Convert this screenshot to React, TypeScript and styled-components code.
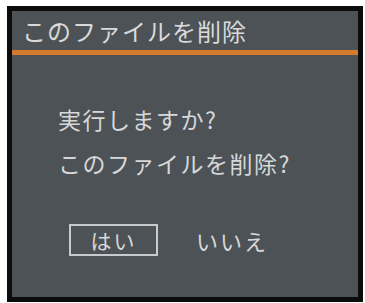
import React from 'react';
import styled, { createGlobalStyle } from 'styled-components';

const Global = createGlobalStyle`
    html, body {
        margin: 0;
        padding: 0;
        background: #ffffff;
    }
    body {
        font-family: "Noto Sans CJK JP", "Noto Sans", sans-serif;
    }
`;

const Frame = styled.div`
    box-sizing: border-box;
    width: 356px;
    height: 296px;
    margin: 6px 0 0 7px;
    border: 5px solid #0c0c0c;
    background: #4d5256;
    display: flex;
    flex-direction: column;
`;

const Header = styled.div`
    height: 39px;
    display: flex;
    align-items: center;
    padding: 0 0 0 10px;
    color: #d9dadb;
    font-size: 24px;
    letter-spacing: 1px;
`;

const Rule = styled.div`
    height: 5px;
    background: #d47a2e;
`;

const Body = styled.div`
    display: flex;
    flex-direction: column;
    padding: 49px 0 0 46px;
`;

const Line = styled.div<{ $gap?: number }>`
    color: #d7d8d9;
    font-size: 23px;
    line-height: 30px;
    letter-spacing: 1.5px;
    margin-top: ${(p) => p.$gap || 0}px;
`;

const Choices = styled.div`
    display: flex;
    align-items: center;
    gap: 36px;
    margin: 46px 0 0 11px;
`;

const Choice = styled.div<{ $active?: boolean }>`
    box-sizing: border-box;
    width: ${(p) => (p.$active ? '89px' : 'auto')};
    height: 32px;
    display: flex;
    align-items: center;
    justify-content: center;
    border: 2px solid ${(p) => (p.$active ? '#c9cacb' : 'transparent')};
    color: #d7d8d9;
    font-size: ${(p) => (p.$active ? '21px' : '22px')};
    letter-spacing: 2px;
`;

const App = () => {
    return (
        <>
            <Global />
            <Frame>
                <Header>このファイルを削除</Header>
                <Rule />
                <Body>
                    <Line>実行しますか?</Line>
                    <Line $gap={14}>このファイルを削除?</Line>
                    <Choices>
                        <Choice $active>はい</Choice>
                        <Choice>いいえ</Choice>
                    </Choices>
                </Body>
            </Frame>
        </>
    );
};

export default App;
